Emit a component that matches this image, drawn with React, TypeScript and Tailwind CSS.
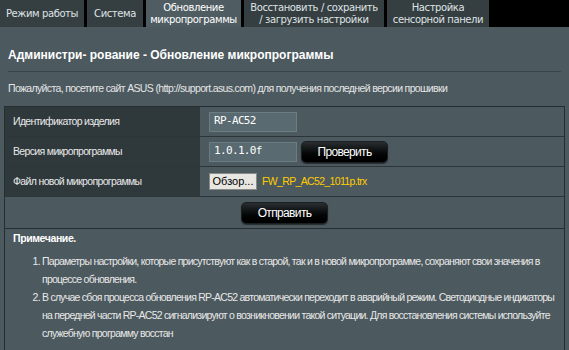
const tabs = [
  { label: ["Режим работы"], w: "w-[84px]" },
  { label: ["Система"], w: "w-[56px]" },
  { label: ["Обновление", "микропрограммы"], w: "w-[95px]", active: true },
  { label: ["Восстановить / сохранить", "/ загрузить настройки"], w: "w-[140px]" },
  { label: ["Настройка", "сенсорной панели"], w: "w-[102px]" },
];

function BlackButton({ label }: { label: string }) {
  return (
    <button className="h-[22px] w-[87px] rounded-[5px] border border-[#1a1f21] bg-gradient-to-b from-[#2a2f31] to-[#000] text-[12px] text-white shadow-[0_1px_1px_rgba(0,0,0,0.5)]">
      {label}
    </button>
  );
}

function Field({ value }: { value: string }) {
  return (
    <div className="flex h-[20px] w-[88px] items-center border border-[#6b7d83] bg-[#596a70] px-[4px] font-['DejaVu_Sans_Mono',monospace] text-[11px] text-white">
      {value}
    </div>
  );
}

const cell = "flex w-[195px] items-center bg-[#2f393c] pl-[8px]";

export default function App() {
  return (
    <div className="h-[350px] w-[569px] overflow-hidden bg-black font-['Liberation_Sans',Arial,sans-serif] text-[10.5px] tracking-[-0.65px] text-[#e8e8e8]">
      <div className="flex h-[27px] gap-[3px]">
        {tabs.map((t, i) => (
          <div
            key={i}
            className={`${t.w} flex flex-col items-center justify-center whitespace-nowrap font-['DejaVu_Sans',sans-serif] text-[10px] leading-[12px] tracking-[-0.4px] ${
              t.active ? "bg-[#4f5c61] text-white" : "bg-[#353e41] text-[#dfe3e4]"
            }`}
          >
            {t.label.map((l) => (
              <span key={l}>{l}</span>
            ))}
          </div>
        ))}
      </div>

      <div className="flex h-[323px] flex-col bg-[#4c595e] px-[4px]">
        <div className="mx-[4px] mt-[21px] border-b border-[#3a4549] pb-[9px] text-[12px] leading-[14px] font-bold tracking-normal text-white">
          Администри- рование - Обновление микропрограммы
        </div>
        <div className="mx-[4px] mt-[9px] mb-[11px] leading-[14px] text-[#e4e6e7]">
          Пожалуйста, посетите сайт ASUS (http://support.asus.com) для получения последней версии прошивки
        </div>

        <div className="border border-[#262e31]">
          <div className="flex h-[30px] border-b border-[#2c3538]">
            <div className={cell}>Идентификатор изделия</div>
            <div className="flex flex-1 items-center pl-[9px]">
              <Field value="RP-AC52" />
            </div>
          </div>
          <div className="flex h-[30px] border-b border-[#2c3538]">
            <div className={cell}>Версия микропрограммы</div>
            <div className="flex flex-1 items-center gap-[4px] pl-[9px]">
              <Field value="1.0.1.0f" />
              <BlackButton label="Проверить" />
            </div>
          </div>
          <div className="flex h-[30px] border-b border-[#2c3538]">
            <div className={cell}>Файл новой микропрограммы</div>
            <div className="flex flex-1 items-center gap-[5px] pl-[9px]">
              <div className="flex h-[17px] w-[48px] items-center justify-center border border-[#8a8a8a] bg-[#e8e6e0] text-[11px] tracking-normal text-black">
                Обзор...
              </div>
              <span className="text-[#ffcc00]">FW_RP_AC52_1011p.trx</span>
            </div>
          </div>
          <div className="flex h-[32px] items-center justify-center border-b border-[#262e31]">
            <BlackButton label="Отправить" />
          </div>
          <div className="h-[121px] px-[8px] pt-0 leading-[18px] tracking-[-0.75px]">
            <div className="font-bold tracking-[-0.4px] text-white">Примечание.</div>
            <ol className="mt-[5px] list-decimal pl-[29px]">
              <li>
                Параметры настройки, которые присутствуют как в старой, так и в новой микропрограмме, сохраняют свои значения в
                процессе обновления.
              </li>
              <li>
                В случае сбоя процесса обновления RP-AC52 автоматически переходит в аварийный режим. Светодиодные индикаторы на
                передней части RP-AC52 сигнализируют о возникновении такой ситуации. Для восстановления системы используйте
                служебную программу восстан
              </li>
            </ol>
          </div>
        </div>
      </div>
    </div>
  );
}
